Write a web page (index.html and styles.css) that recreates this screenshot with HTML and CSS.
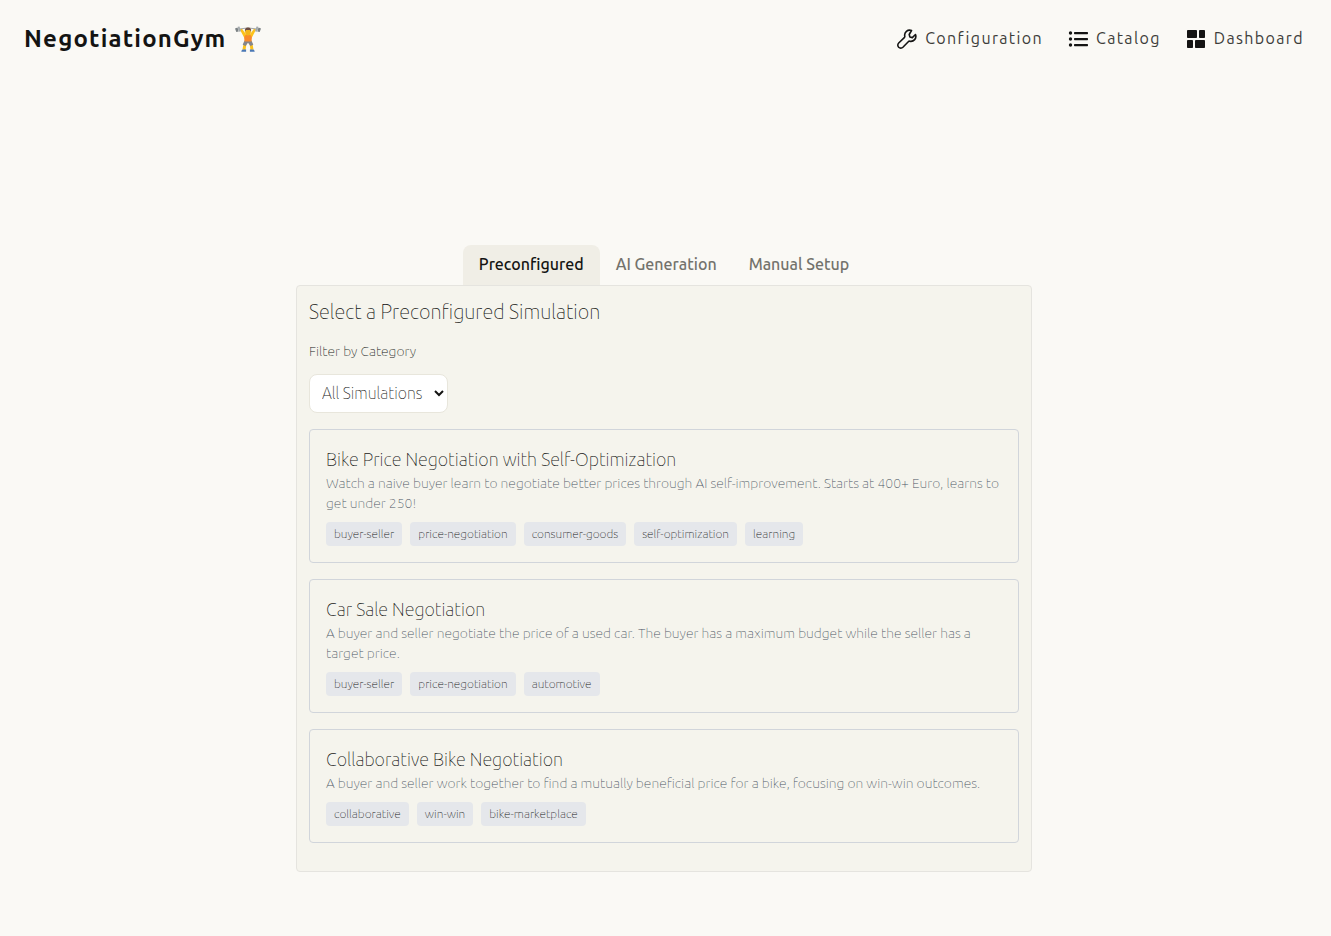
FILE: index.html
```html
<!DOCTYPE html>
<html lang="en">
<head>
<meta charset="utf-8">
<title>NegotiationGym</title>
<link rel="stylesheet" href="styles.css">
</head>
<body>
<header class="topbar">
  <a class="brand" href="#">NegotiationGym
    <svg class="brand-icon" viewBox="0 0 28 28" aria-hidden="true">
      <path d="M8.500 24.500 9.600 18.500 13 16.500 12.300 20 11.500 25zM19.500 24.500 18.400 18.500 15 16.500 15.700 20 16.500 25z" fill="#fcc21b"/>
      <path d="M8.500 24.500h3.600v2.300H7.300q0-1.600 1.200-2.300zM15.900 24.500h3.600q1.200.7 1.200 2.300h-4.800z" fill="#4a78b5"/>
      <path d="M10.500 15.500h7l1.800 4.200-2.800 1.300L14 17.800 11.500 21l-2.800-1.300z" fill="#85858a"/>
      <path d="M9.800 9.500h8.400L17.500 16.500h-7z" fill="#f98a2b"/>
      <path d="M5.800 4.500 8 3.800 12 9.300 10 12.300zM22.200 4.500 20 3.800 16 9.300 18 12.300z" fill="#fcc21b"/>
      <path d="M3 4.300Q14 1.500 25 4.300" fill="none" stroke="#8b9092" stroke-width=".8"/>
      <ellipse cx="14" cy="6.800" rx="2.900" ry="3.600" fill="#f2b51c"/>
      <path d="M10.900 6.800Q10.500 2.600 14 2.600t3.100 4.200L16 5.100h-4z" fill="#6d4c41"/>
      <path d="M1 3.500 3.500 2.500 4.700 6.500 2.300 7zM27 3.500 24.500 2.500 23.300 6.500 25.700 7z" fill="#7b8284"/>
      <path d="M3.700 1.700 5.500 1.400 7 6.200 5 6.800zM24.300 1.700 22.500 1.400 21 6.200 23 6.800z" fill="#a3aaad"/>
    </svg>
  </a>
  <nav class="nav">
    <a class="nav-link" href="#"><svg class="nav-icon" viewBox="0 0 20 20" fill="none" stroke="currentColor" stroke-width="1.600" stroke-linecap="round" stroke-linejoin="round" aria-hidden="true"><path d="M14.500 1.500a5 5 0 0 0-6.700 5.800c.1.500-.1 1-.5 1.400L1.700 14a2.900 2.900 0 1 0 4.200 4.300l5.400-5.600c.4-.4.900-.6 1.400-.5a5 5 0 0 0 5.800-6.700l-3.200 3.100-2.400-.6-.7-2.500z"/></svg><span class="nav-text">Configuration</span></a>
    <a class="nav-link" href="#"><svg class="nav-icon" viewBox="0 0 20 20" fill="currentColor" aria-hidden="true"><circle cx="2.500" cy="4" r="1.700"/><circle cx="2.500" cy="10" r="1.700"/><circle cx="2.500" cy="16" r="1.700"/><rect x="6" y="3" width="14" height="2.200" rx=".7"/><rect x="6" y="9" width="14" height="2.200" rx=".7"/><rect x="6" y="15" width="14" height="2.200" rx=".7"/></svg><span class="nav-text">Catalog</span></a>
    <a class="nav-link" href="#"><svg class="nav-icon" viewBox="0 0 20 20" fill="currentColor" aria-hidden="true"><rect x="1" y="1" width="10" height="8" rx=".8"/><rect x="13" y="1" width="6" height="8" rx=".8"/><rect x="1" y="11" width="6" height="8" rx=".8"/><rect x="9" y="11" width="10" height="8" rx=".8"/></svg><span class="nav-text">Dashboard</span></a>
  </nav>
</header>
<main class="page">
  <div class="tabs" role="tablist">
    <button class="tab tab-active" type="button" role="tab" aria-selected="true">Preconfigured</button>
    <button class="tab" type="button" role="tab" aria-selected="false">AI Generation</button>
    <button class="tab" type="button" role="tab" aria-selected="false">Manual Setup</button>
  </div>
  <section class="panel">
    <h2 class="panel-title">Select a Preconfigured Simulation</h2>
    <label class="filter-label" for="category">Filter by Category</label>
    <select class="filter-select" id="category"><option>All Simulations</option></select>
    <article class="card">
      <h3 class="card-title">Bike Price Negotiation with Self-Optimization</h3>
      <p class="card-text">Watch a naive buyer learn to negotiate better prices through AI self-improvement. Starts at 400+ Euro, learns to get under 250!</p>
      <div class="tags"><span class="tag">buyer-seller</span><span class="tag">price-negotiation</span><span class="tag">consumer-goods</span><span class="tag">self-optimization</span><span class="tag">learning</span></div>
    </article>
    <article class="card">
      <h3 class="card-title">Car Sale Negotiation</h3>
      <p class="card-text">A buyer and seller negotiate the price of a used car. The buyer has a maximum budget while the seller has a target price.</p>
      <div class="tags"><span class="tag">buyer-seller</span><span class="tag">price-negotiation</span><span class="tag">automotive</span></div>
    </article>
    <article class="card">
      <h3 class="card-title">Collaborative Bike Negotiation</h3>
      <p class="card-text">A buyer and seller work together to find a mutually beneficial price for a bike, focusing on win-win outcomes.</p>
      <div class="tags"><span class="tag">collaborative</span><span class="tag">win-win</span><span class="tag">bike-marketplace</span></div>
    </article>
  </section>
</main>
</body>
</html>
```
FILE: styles.css
```css
* { box-sizing: border-box; }
body {
  margin: 0;
  padding-right: 3px;
  background: #faf9f5;
  color: #141413;
  font-family: Ubuntu, "Open Sans", "Noto Sans", sans-serif;
  font-size: 16px;
  font-weight: 100;
  line-height: 24px;
}
h2, h3, p { margin: 0; font-weight: 100; }
.topbar {
  display: flex;
  align-items: center;
  justify-content: space-between;
  padding: 21px 24px 20px;
}
.brand {
  display: flex;
  align-items: center;
  gap: 8px;
  color: #141413;
  font-size: 24px;
  font-weight: 600;
  letter-spacing: 0.05em;
  line-height: 36px;
  text-decoration: none;
}
.brand-icon { width: 28px; height: 28px; }
.nav { display: flex; gap: 25px; }
.nav-link {
  display: flex;
  align-items: center;
  gap: 8px;
  color: #3d3d3a;
  font-weight: 400;
  letter-spacing: 0.085em;
  text-decoration: none;
}
.nav-text { padding-bottom: 2px; line-height: 22px; }
.nav-icon { width: 20px; height: 20px; color: #141413; }
.page {
  max-width: 736px;
  margin: 0 auto;
  padding: 168px 0 64px;
}
.tabs { display: flex; justify-content: center; }
.tab {
  padding: 7px 16px 9px;
  border: 0;
  border-radius: 8px 8px 0 0;
  background: transparent;
  color: #73726c;
  font: inherit;
  font-weight: 500;
}
.tab-active { background: #f0eee6; color: #141413; }
.panel {
  padding: 12px 12px 28px;
  border: 1px solid #e5e4df;
  border-radius: 4px;
  background: #f5f4ed;
}
.panel-title { font-size: 20px; line-height: 28px; color: #141413; }
.filter-label {
  display: block;
  margin: 15px 0 13px;
  color: #141413;
  font-size: 14px;
  line-height: 20px;
}
.filter-select {
  display: block;
  height: 39px;
  padding: 0 8px 1px;
  border: 1px solid #e8e6dc;
  border-radius: 8px;
  background: #fff;
  color: #141413;
  font: inherit;
}
.card {
  margin-top: 16px;
  padding: 15px 16px 16px;
  border: 1px solid #d1d5db;
  border-radius: 4px;
}
.card-title { font-size: 18px; line-height: 28px; color: #141413; }
.card-text { color: #4b5563; font-size: 14px; line-height: 20px; }
.tags { display: flex; flex-wrap: wrap; gap: 8px; margin-top: 9px; }
.tag {
  padding: 4px 8px;
  border-radius: 4px;
  background: #e5e7eb;
  color: #141413;
  font-size: 12px;
  line-height: 16px;
}
```
